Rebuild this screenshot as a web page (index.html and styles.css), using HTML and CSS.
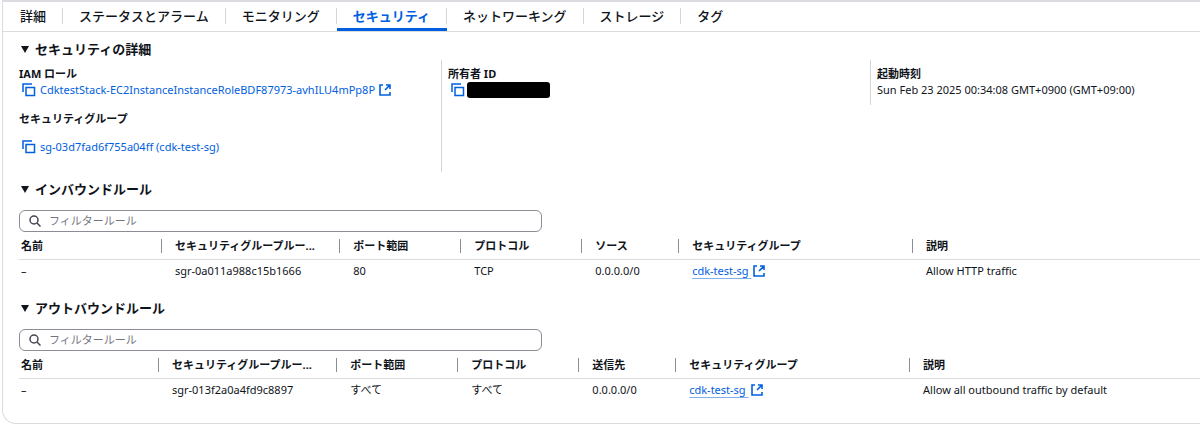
FILE: index.html
```html
<!DOCTYPE html>
<html lang="ja">
<head>
<meta charset="utf-8">
<title>セキュリティ</title>
<link rel="stylesheet" href="styles.css">
</head>
<body>
<svg class="sprite" aria-hidden="true">
  <symbol id="copy" viewBox="0 0 14 14"><path d="M1 9V1h9M4 4.500h8.500v8H4z"/></symbol>
  <symbol id="external" viewBox="0 0 12 12"><path d="M4 1H1v10h10V8M7 1h4v4M11 1 6 6"/></symbol>
  <symbol id="search" viewBox="0 0 12 12"><circle cx="5" cy="5" r="4"/><path d="m8 8 3.500 3.500"/></symbol>
  <symbol id="caret" viewBox="0 0 8 8"><path d="M0 1h8L4 8z"/></symbol>
</svg>
<main class="card">
  <nav class="tabs">
    <a class="tab" href="#details">詳細</a>
    <a class="tab" href="#status">ステータスとアラーム</a>
    <a class="tab" href="#monitoring">モニタリング</a>
    <a class="tab tab-active" href="#security" aria-current="page">セキュリティ</a>
    <a class="tab" href="#network">ネットワーキング</a>
    <a class="tab" href="#storage">ストレージ</a>
    <a class="tab" href="#tags">タグ</a>
  </nav>
  <div class="content">
    <details open>
      <summary class="heading"><svg class="caret"><use href="#caret"/></svg>セキュリティの詳細</summary>
      <div class="columns">
        <dl class="column">
          <dt>IAM ロール</dt>
          <dd class="value"><button class="copy" aria-label="コピー"><svg><use href="#copy"/></svg></button><a class="link" href="#role">CdktestStack-EC2InstanceInstanceRoleBDF87973-avhILU4mPp8P<svg class="external"><use href="#external"/></svg></a></dd>
          <dt class="next">セキュリティグループ</dt>
          <dd class="value spaced"><button class="copy" aria-label="コピー"><svg><use href="#copy"/></svg></button><a class="link" href="#sg">sg-03d7fad6f755a04ff (cdk-test-sg)</a></dd>
        </dl>
        <dl class="column">
          <dt>所有者 ID</dt>
          <dd class="value"><button class="copy" aria-label="コピー"><svg><use href="#copy"/></svg></button><span class="redacted"></span></dd>
        </dl>
        <dl class="column column-short">
          <dt>起動時刻</dt>
          <dd class="value">Sun Feb 23 2025 00:34:08 GMT+0900 (GMT+09:00)</dd>
        </dl>
      </div>
    </details>
    <details class="rules" open>
      <summary class="heading"><svg class="caret"><use href="#caret"/></svg>インバウンドルール</summary>
      <label class="filter"><svg><use href="#search"/></svg><input type="text" placeholder="フィルタールール" aria-label="フィルタールール"></label>
      <table class="table">
        <colgroup><col class="c-name"><col class="c-rule"><col class="c-port"><col class="c-port"><col class="c-source"><col class="c-group"><col></colgroup>
        <thead><tr><th>名前</th><th>セキュリティグループルー...</th><th>ポート範囲</th><th>プロトコル</th><th>ソース</th><th>セキュリティグループ</th><th>説明</th></tr></thead>
        <tbody><tr><td>–</td><td>sgr-0a011a988c15b1666</td><td>80</td><td>TCP</td><td>0.0.0.0/0</td><td><a class="link underlined" href="#sg">cdk-test-sg <svg class="external"><use href="#external"/></svg></a></td><td>Allow HTTP traffic</td></tr></tbody>
      </table>
    </details>
    <details class="rules outbound" open>
      <summary class="heading"><svg class="caret"><use href="#caret"/></svg>アウトバウンドルール</summary>
      <label class="filter"><svg><use href="#search"/></svg><input type="text" placeholder="フィルタールール" aria-label="フィルタールール"></label>
      <table class="table">
        <colgroup><col class="c-name"><col class="c-rule"><col class="c-port"><col class="c-port"><col class="c-source"><col class="c-group"><col></colgroup>
        <thead><tr><th>名前</th><th>セキュリティグループルー...</th><th>ポート範囲</th><th>プロトコル</th><th>送信先</th><th>セキュリティグループ</th><th>説明</th></tr></thead>
        <tbody><tr><td>–</td><td>sgr-013f2a0a4fd9c8897</td><td>すべて</td><td>すべて</td><td>0.0.0.0/0</td><td><a class="link underlined" href="#sg">cdk-test-sg <svg class="external"><use href="#external"/></svg></a></td><td>Allow all outbound traffic by default</td></tr></tbody>
      </table>
    </details>
  </div>
</main>
</body>
</html>
```
FILE: styles.css
```css
* { box-sizing: border-box; }
body {
  margin: 0;
  background: #fff;
  color: #0f141a;
  font: 11px/16px "Noto Sans", "Noto Sans CJK JP", sans-serif;
}
.sprite { display: none; }
svg { fill: none; stroke: currentColor; flex: none; }
.card {
  margin-left: 2px;
  padding-bottom: 21px;
  border: solid #dcdce0;
  border-width: 2px 0 1px 1px;
  border-bottom-left-radius: 14px;
}
.tabs {
  display: flex;
  height: 30px;
  padding-left: 1px;
  border-bottom: 1px solid #dcdce0;
}
.tab {
  padding: 0 17px 0 16px;
  color: #0f141a;
  font-size: 13px;
  font-weight: 500;
  line-height: 28px;
  text-decoration: none;
  background: linear-gradient(#d5d5da, #d5d5da) right 6px / 1px 16px no-repeat;
}
.tab:last-child { background: none; }
.tab-active { color: #0060e0; font-weight: 700; border-bottom: 3px solid #0060e0; }
.content { padding: 8px 0 0 16px; }
.heading {
  display: flex;
  align-items: center;
  gap: 6px;
  height: 18px;
  padding-left: 2px;
  font-size: 13px;
  font-weight: 700;
  line-height: 18px;
  list-style: none;
}
.caret { width: 8px; height: 8px; fill: currentColor; stroke: none; }
.columns {
  display: grid;
  grid-template-columns: 422fr 429fr 330fr;
  align-items: stretch;
  margin-top: 2px;
}
.column { margin: 0; padding: 5px 0 17px; }
.column + .column { padding-left: 6px; border-left: 1px solid #d5d5da; }
.column-short { align-self: start; padding-bottom: 7px; }
dt { font-weight: 700; line-height: 17px; }
dd { margin: 0; }
.next { margin-top: 12px; }
.value { display: flex; align-items: center; height: 16px; }
.spaced { margin-top: 12px; }
.copy {
  display: flex;
  margin: 0 4px 0 3px;
  padding: 0;
  border: 0;
  background: none;
  color: #0060e0;
}
.copy svg { width: 14px; height: 14px; stroke-width: 1.500; }
.link { color: #0060e0; text-decoration: none; }
.external { width: 12px; height: 12px; margin-left: 4px; stroke-width: 1.600; vertical-align: -2px; }
.underlined .external { margin-left: 2px; }
.underlined { text-decoration: underline; text-decoration-color: #80b0f0; text-underline-offset: 3px; }
.redacted { width: 83px; height: 16px; margin-left: -2px; border-radius: 3px; background: #000; }
.rules { margin-top: 8px; }
.outbound { margin-top: 16px; }
.filter {
  display: flex;
  align-items: center;
  gap: 8px;
  width: 44.300%;
  height: 22px;
  margin-top: 12px;
  padding: 0 9px;
  border: 1px solid #8c8c94;
  border-radius: 6px;
  color: #424650;
}
.filter svg { width: 12px; height: 12px; stroke-width: 1.500; }
.filter input {
  flex: 1;
  min-width: 0;
  padding: 0;
  border: 0;
  outline: 0;
  background: none;
  font: inherit;
}
.filter input::placeholder { color: #72747e; }
.table { width: 100%; border-collapse: collapse; table-layout: fixed; }
th, td { padding: 0 0 0 13px; text-align: left; white-space: nowrap; }
th {
  height: 27px;
  padding-top: 2px;
  border-bottom: 1px solid #dcdce0;
  background: linear-gradient(#8c8c94, #8c8c94) right 7px / 1px 14px no-repeat;
}
th:last-child { background: none; }
th:first-child, td:first-child { padding-left: 2px; }
td { height: 24px; }
.c-name { width: 12.100%; }
.outbound .c-name { width: 11.850%; }
.c-rule { width: 15.100%; }
.c-port { width: 10.250%; }
.c-source { width: 8.200%; }
.c-group { width: 19.800%; }
```
